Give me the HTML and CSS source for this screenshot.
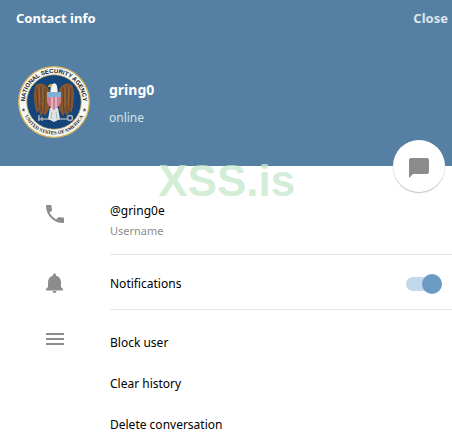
FILE: index.html
```html
<!DOCTYPE html>
<html lang="en">
<head>
    <meta charset="UTF-8">
    <meta name="viewport" content="width=device-width, initial-scale=1.0">
    <title>Contact info</title>
    <link rel="stylesheet" href="styles.css">
</head>
<body>
    <header class="header">
        <div class="header-bar">
            <h1 class="header-title">Contact info</h1>
            <button class="close-btn" type="button">Close</button>
        </div>
        <div class="profile">
            <svg class="avatar" viewBox="0 0 72 72" role="img" aria-label="National Security Agency seal">
                <defs>
                    <path id="arcTop" d="M11.4 51.4 A29 29 0 1 1 60.6 51.4"/>
                    <path id="arcBottom" d="M3.5 36 A32.5 32.5 0 0 0 68.5 36"/>
                </defs>
                <circle cx="36" cy="36" r="35.3" fill="#f7f7f3" stroke="#d6b45a" stroke-width="1.3"/>
                <circle cx="36" cy="36" r="27.3" fill="#14457a" stroke="#cdb46c" stroke-width=".8"/>
                <text class="seal-text"><textPath href="#arcTop" startOffset="50%">NATIONAL SECURITY AGENCY</textPath></text>
                <text class="seal-text seal-text-small"><textPath href="#arcBottom" startOffset="50%">UNITED STATES OF AMERICA</textPath></text>
                <path d="M5.5 42 l.6 1.2 1.3 .2 -1 .9 .3 1.3 -1.2 -.6 -1.2 .6 .3 -1.3 -1 -.9 1.3 -.2 Z M66.5 42 l.6 1.2 1.3 .2 -1 .9 .3 1.3 -1.2 -.6 -1.2 .6 .3 -1.3 -1 -.9 1.3 -.2 Z" fill="#555"/>
                <!-- wings -->
                <path d="M31 24 C28 17 22 16 18 19 C15 25 16 33 17 41 L19 47 L21 44 L23 51 L25 46 L27 50 L31 43 Z" fill="#85552f"/>
                <path d="M41 24 C44 17 50 16 54 19 C57 25 56 33 55 41 L53 47 L51 44 L49 51 L47 46 L45 50 L41 43 Z" fill="#85552f"/>
                <path d="M19 22 L20 43 M23 20 L23 46 M27 22 L26 46 M53 22 L52 43 M49 20 L49 46 M45 22 L46 46" fill="none" stroke="#553622" stroke-width=".7"/>
                <path d="M21 21 L22 39 M25 21 L25 42 M51 21 L50 39 M47 21 L47 42" fill="none" stroke="#a67849" stroke-width=".6"/>
                <!-- key -->
                <path d="M20 53 H50" stroke="#a9b1b4" stroke-width="1.4"/>
                <path d="M21 49 V55 M24 51 V55" stroke="#a9b1b4" stroke-width="1.4"/>
                <circle cx="52" cy="52" r="2.5" fill="none" stroke="#a9b1b4" stroke-width="1.4"/>
                <!-- tail and legs -->
                <path d="M32 42 L40 42 L42 53 L36 56 L30 53 Z" fill="#dfe3e4"/>
                <path d="M34 46 L33 53 M38 46 L39 53" stroke="#9ba4a8" stroke-width=".7"/>
                <!-- head -->
                <path d="M32 28 L33 20 Q35 16 38 18 L39 20 L40 28 Z" fill="#f4f4f2"/>
                <path d="M34 18 Q30 18 30 21 L34 21 Z" fill="#dcae3b"/>
                <!-- shield -->
                <path d="M29 27 H43 V35 Q42 41 36 44 Q30 41 29 35 Z" fill="#cf7f92"/>
                <path d="M34 30 V43 M38 30 V43" stroke="#f0dfe2" stroke-width="1"/>
                <path d="M29 26 H43 V31 H29 Z" fill="#7fb0d6"/>
            </svg>
            <div class="profile-text">
                <h2 class="profile-name">gring0</h2>
                <p class="profile-status">online</p>
            </div>
        </div>
        <div class="watermark" aria-hidden="true">XSS.is</div>
        <button class="message-btn" type="button" aria-label="Send message">
            <svg class="message-icon" viewBox="0 0 20 20">
                <path d="M2 0 H18 Q20 0 20 2 V14 Q20 16 18 16 H4 L0 20 V2 Q0 0 2 0 Z" fill="#8c8c8c"/>
            </svg>
        </button>
    </header>

    <main class="content">
        <section class="row row-username">
            <svg class="row-icon" viewBox="0 0 24 24" aria-hidden="true">
                <path d="M6.62 10.79c1.44 2.83 3.76 5.14 6.59 6.59l2.2-2.2c.27-.27.67-.36 1.02-.24 1.12.37 2.33.57 3.57.57.55 0 1 .45 1 1V20c0 .55-.45 1-1 1-9.39 0-17-7.61-17-17 0-.55.45-1 1-1h3.5c.55 0 1 .45 1 1 0 1.25.2 2.45.57 3.57.11.35.03.74-.25 1.02l-2.2 2.2z"/>
            </svg>
            <div class="row-body">
                <p class="username">@gring0e</p>
                <p class="username-label">Username</p>
            </div>
        </section>

        <section class="row row-notifications">
            <svg class="row-icon" viewBox="0 0 24 24" aria-hidden="true">
                <path d="M11.5 22c1.1 0 2-.9 2-2h-4c0 1.1.9 2 2 2zm6.5-6v-5c0-3.07-1.8-5.64-5-6.32V4c0-.83-.67-1.5-1.5-1.5s-1.5.67-1.5 1.5v.68C6.8 5.36 5 7.92 5 11v5l-2 2v1.500h17V18z"/>
            </svg>
            <div class="row-body row-toggle">
                <label for="notifications">Notifications</label>
                <input class="switch" type="checkbox" id="notifications" checked>
            </div>
        </section>

        <section class="row row-actions">
            <svg class="row-icon" viewBox="0 0 24 24" aria-hidden="true">
                <path d="M3 6h18v2H3zM3 11h18v2H3zM3 16h18v2H3z"/>
            </svg>
            <div class="row-body actions">
                <button class="action-btn" type="button">Block user</button>
                <button class="action-btn" type="button">Clear history</button>
                <button class="action-btn" type="button">Delete conversation</button>
            </div>
        </section>
    </main>
</body>
</html>
```
FILE: styles.css
```css
* {
    box-sizing: border-box;
}
body {
    background-color: #fff;
    font-family: Tahoma, 'Noto Sans', sans-serif;
    font-size: 12px;
    line-height: 16px;
    color: #000;
    margin: 0;
}
h1, h2, p {
    margin: 0;
}
button {
    border: none;
    padding: 0;
    background: none;
    font: inherit;
    cursor: pointer;
}
.header {
    position: relative;
    height: 166px;
    background-color: #5580a3;
    color: #fff;
}
.header-bar {
    display: flex;
    justify-content: space-between;
    align-items: center;
    padding: 10px 4px 0 16px;
}
.header-title {
    font-size: 13px;
    line-height: 16px;
    font-weight: bold;
}
.close-btn {
    color: #dde6ed;
    font-size: 13px;
    font-weight: bold;
}
.profile {
    display: flex;
    align-items: center;
    gap: 19px;
    padding: 40px 18px 0;
}
.avatar {
    width: 72px;
    height: 72px;
}
.seal-text {
    font-family: 'Liberation Sans', Arial, sans-serif;
    font-size: 6px;
    font-weight: bold;
    fill: #222;
    text-anchor: middle;
}
.seal-text-small {
    font-family: 'Liberation Serif', serif;
    font-size: 5px;
}
.profile-text {
    padding-top: 4px;
}
.profile-name {
    margin-bottom: 12px;
    font-size: 14px;
    line-height: 16px;
    font-weight: bold;
}
.profile-status {
    color: #d3e0ea;
}
.watermark {
    position: absolute;
    left: 35%;
    bottom: -40px;
    font-family: 'Liberation Sans', Arial, sans-serif;
    font-size: 44px;
    line-height: 50px;
    font-weight: bold;
    color: rgba(200, 232, 205, 0.8);
}
.message-btn {
    position: absolute;
    right: 7px;
    bottom: -26px;
    display: flex;
    align-items: center;
    justify-content: center;
    width: 52px;
    height: 52px;
    border-radius: 50%;
    background-color: #fff;
    box-shadow: 0 1px 1px rgba(0, 0, 0, 0.25);
}
.message-icon {
    width: 20px;
    height: 20px;
    margin-top: 4px;
}
.row {
    display: flex;
    padding-left: 43px;
}
.row-icon {
    flex: none;
    width: 24px;
    height: 24px;
    margin-right: 43px;
    fill: #8c8c8c;
}
.row-body {
    flex: 1;
    border-bottom: 1px solid #e6e6e6;
}
.row-username .row-icon {
    margin-top: 36px;
}
.row-username .row-body {
    padding: 37px 0 15px;
}
.username-label {
    margin-top: 4px;
    font-size: 11px;
    color: #8c8c8c;
}
.row-notifications {
    align-items: center;
}
.row-toggle {
    display: flex;
    align-items: center;
    justify-content: space-between;
    height: 55px;
    padding: 3px 10px 0 0;
}
.switch {
    appearance: none;
    position: relative;
    width: 36px;
    height: 14px;
    margin: 0;
    border-radius: 7px;
    background-color: #c1d9ed;
    cursor: pointer;
}
.switch::before {
    content: '';
    position: absolute;
    top: -3px;
    left: 0;
    width: 20px;
    height: 20px;
    border-radius: 50%;
    background-color: #6b9bc3;
}
.switch:checked::before {
    left: 16px;
}
.row-actions {
    padding-top: 17px;
}
.actions {
    display: flex;
    flex-direction: column;
    align-items: flex-start;
    gap: 25px;
    padding-top: 8px;
    border-bottom: none;
}
.action-btn {
    color: #000;
}
```
